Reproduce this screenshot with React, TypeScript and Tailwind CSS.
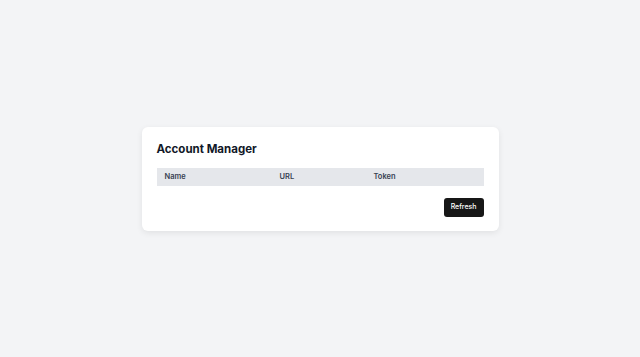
export default function App() {
	return (
		<main className="flex min-h-screen items-center justify-center bg-[#f3f4f6] font-['Inter','Liberation_Sans',sans-serif]">
			<section className="w-[357px] rounded-md bg-white px-[15px] pt-[15px] pb-[14px] shadow-[0_2px_6px_rgba(0,0,0,0.08)]">
				<h1 className="text-[11.5px] font-bold leading-[15px] text-[#111827]">Account Manager</h1>
				<table className="mt-[11px] w-full table-fixed border-collapse">
					<thead>
						<tr className="h-[18px] bg-[#e5e7eb] text-left text-[7.5px] font-semibold text-[#374151]">
							<th className="w-[115px] pl-[8px] font-semibold">Name</th>
							<th className="w-[94px] pl-[8px] font-semibold">URL</th>
							<th className="pl-[8px] font-semibold">Token</th>
						</tr>
					</thead>
					<tbody />
				</table>
				<div className="mt-[12px] flex justify-end">
					<button
						className="h-[19px] rounded-[3px] bg-[#171717] px-[7px] text-[7px] font-medium text-white"
						type="button"
					>
						Refresh
					</button>
				</div>
			</section>
		</main>
	);
}
